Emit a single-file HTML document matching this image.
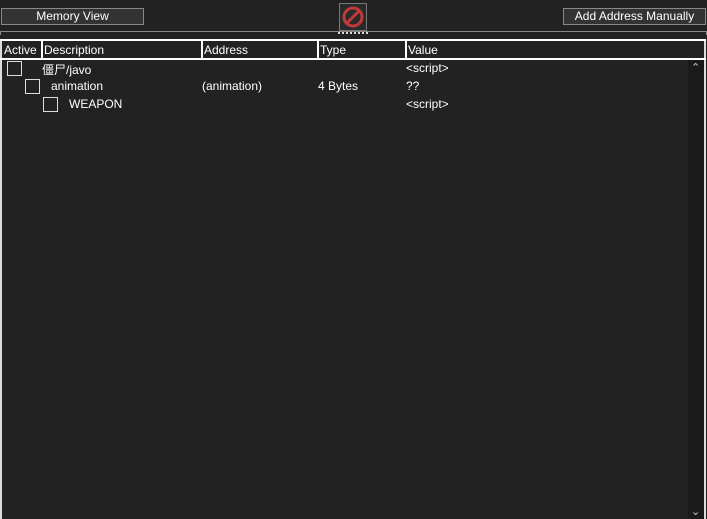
<!DOCTYPE html><html><head><style>
body{margin:0;width:707px;height:519px;background:#222;font-family:"Liberation Sans","Noto Sans CJK SC",sans-serif;font-size:12px;color:#fff;position:relative;overflow:hidden}
.a{position:absolute}
.btn{border:1px solid #888;background:#333;text-align:center;line-height:15px;box-sizing:border-box}
.cb{position:absolute;width:15px;height:15px;border:1px solid #ddd;box-sizing:border-box}
.hd{top:39px;height:21px;line-height:18px;border-top:2px solid #fff;border-bottom:2px solid #fff;box-sizing:border-box}
.col{position:absolute;top:0;height:17px;border-left:2px solid #fff;padding-left:1px}
</style></head><body>
<div class="a btn" style="left:1px;top:8px;width:143px;height:17px">Memory View</div>
<div class="a btn" style="left:563px;top:8px;width:143px;height:17px">Add Address Manually</div>
<div class="a" style="left:339px;top:3px;width:28px;height:28px;border:1px solid #777;box-sizing:border-box;background:#2a2a2a">
<svg width="26" height="26" viewBox="0 0 26 26"><circle cx="13" cy="13" r="9" fill="none" stroke="#c0393b" stroke-width="3"/><line x1="7" y1="19" x2="19" y2="7" stroke="#c0393b" stroke-width="3"/></svg></div>
<div class="a" style="left:0;top:31px;width:707px;height:4px;border-top:1px solid #888;border-left:1px solid #888;border-right:1px solid #888;box-sizing:border-box"></div>
<div class="a" style="left:338px;top:32px;width:30px;height:2px;border-top:2px dotted #ddd"></div>
<div class="a" style="left:0;top:39px;width:2px;height:480px;background:#ddd"></div>
<div class="a" style="left:704px;top:39px;width:2px;height:480px;background:#ddd"></div>
<div class="a hd" style="left:0;width:706px">
<div class="col" style="left:0;border:none;padding-left:4px">Active</div>
<div class="col" style="left:41px">Description</div>
<div class="col" style="left:201px">Address</div>
<div class="col" style="left:317px">Type</div>
<div class="col" style="left:405px">Value</div>
</div>
<div class="a" style="left:688px;top:60px;width:16px;height:459px;background:#1a1a1a"></div>
<div class="a" style="left:691px;top:61px;color:#ccc;font-size:11px">&#8963;</div>
<div class="a" style="left:691px;top:505px;color:#ccc;font-size:11px">&#8964;</div>
<div class="cb" style="left:7px;top:61px"></div>
<div class="a" style="left:42px;top:61px">僵尸/javo</div>
<div class="a" style="left:406px;top:61px">&lt;script&gt;</div>
<div class="cb" style="left:25px;top:79px"></div>
<div class="a" style="left:51px;top:79px">animation</div>
<div class="a" style="left:202px;top:79px">(animation)</div>
<div class="a" style="left:318px;top:79px">4 Bytes</div>
<div class="a" style="left:406px;top:79px">??</div>
<div class="cb" style="left:43px;top:97px"></div>
<div class="a" style="left:69px;top:97px">WEAPON</div>
<div class="a" style="left:406px;top:97px">&lt;script&gt;</div>
</body></html>
